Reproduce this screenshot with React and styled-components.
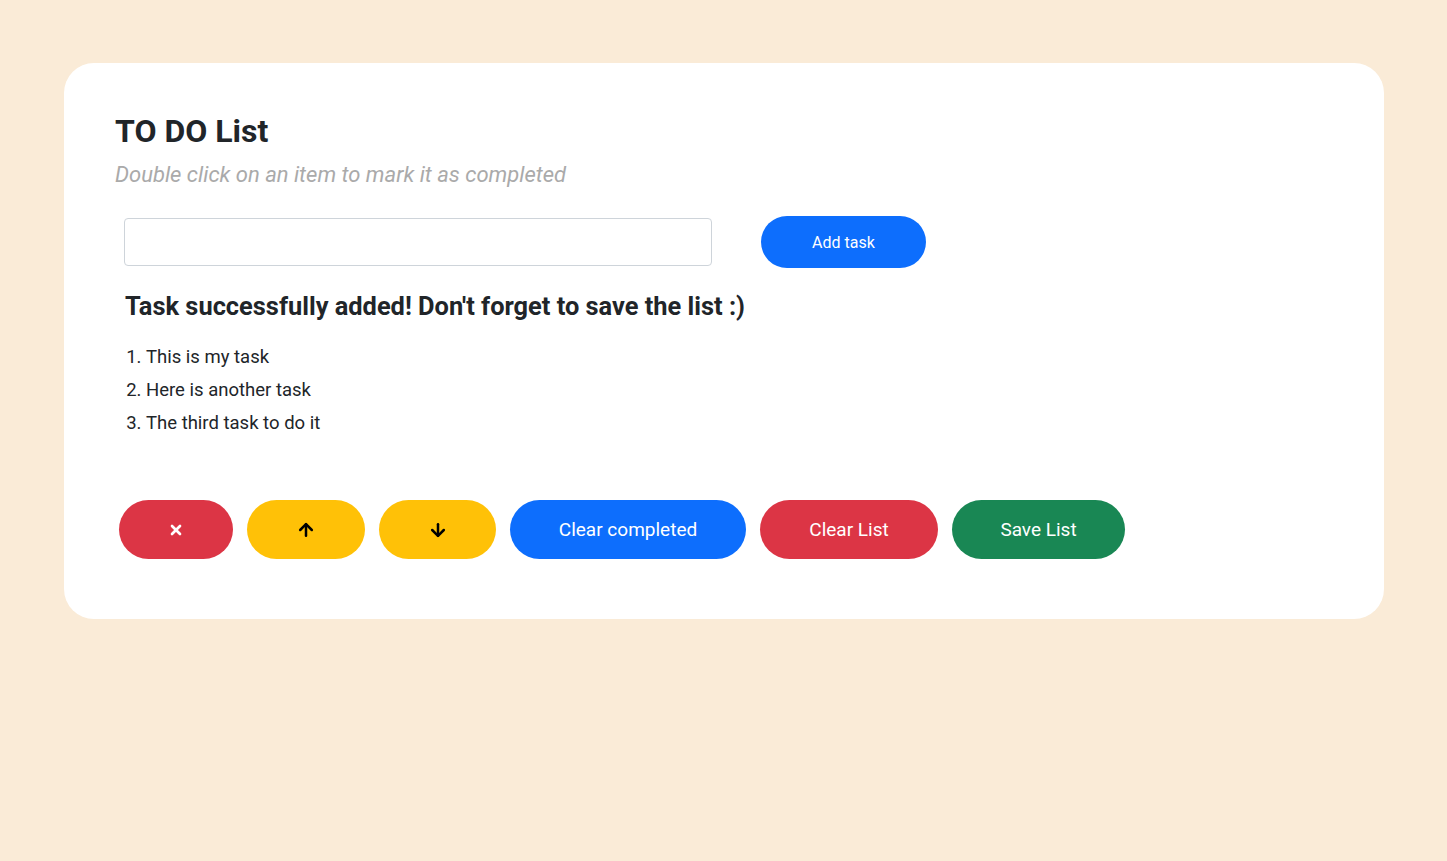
import React, { useState } from "react";
import styled, { createGlobalStyle } from "styled-components";
import { X, ArrowUp, ArrowDown } from "lucide-react";

const GlobalStyle = createGlobalStyle`
  body {
    margin: 0;
    background: #faebd7;
    font-family: Roboto, "Liberation Sans", sans-serif;
    color: #212529;
  }
`;

const colors = {
  danger: "#dc3545",
  warning: "#ffc107",
  primary: "#0d6efd",
  success: "#198754",
};

const App = () => {
  const [tasks] = useState([
    "This is my task",
    "Here is another task",
    "The third task to do it",
  ]);
  const [value, setValue] = useState("");

  return (
    <Page>
      <GlobalStyle />
      <Card>
        <Title>TO DO List</Title>
        <Subtitle>Double click on an item to mark it as completed</Subtitle>
        <InputRow>
          <TaskInput value={value} onChange={(e) => setValue(e.target.value)} />
          <AddBtn>Add task</AddBtn>
        </InputRow>
        <Message>Task successfully added! Don't forget to save the list :)</Message>
        <TaskList>
          {tasks.map((t) => (
            <TaskItem key={t}>{t}</TaskItem>
          ))}
        </TaskList>
        <Actions>
          <PillBtn variant="danger" w={114}>
            <X size={16} strokeWidth={4} />
          </PillBtn>
          <PillBtn variant="warning" w={118} dark>
            <ArrowUp size={20} strokeWidth={3} />
          </PillBtn>
          <PillBtn variant="warning" w={117} dark>
            <ArrowDown size={20} strokeWidth={3} />
          </PillBtn>
          <PillBtn variant="primary" w={236}>Clear completed</PillBtn>
          <PillBtn variant="danger" w={178}>Clear List</PillBtn>
          <PillBtn variant="success" w={173}>Save List</PillBtn>
        </Actions>
      </Card>
    </Page>
  );
};

export default App;

const Page = styled.div`
  min-height: 861px;
  padding: 63px 63px 0 64px;
  box-sizing: border-box;
`;

const Card = styled.div`
  background: #fff;
  border-radius: 30px;
  width: 1320px;
  height: 556px;
  box-sizing: border-box;
  padding: 48px 51px 0 51px;
  display: flex;
  flex-direction: column;
`;

const Title = styled.h1`
  margin: 0;
  font-size: 32px;
  font-weight: 700;
  line-height: 40px;
  color: #212529;
`;

const Subtitle = styled.p`
  margin: 10px 0 0;
  font-size: 22px;
  font-style: italic;
  color: #aaaaaa;
  line-height: 28px;
`;

const InputRow = styled.div`
  display: flex;
  align-items: center;
  margin: 27px 0 0 9px;
`;

const TaskInput = styled.input`
  width: 588px;
  height: 48px;
  box-sizing: border-box;
  border: 1px solid #ced4da;
  border-radius: 4px;
  padding: 6px 12px;
  font-size: 16px;
  outline: none;
`;

const AddBtn = styled.button`
  margin-left: 49px;
  width: 165px;
  height: 52px;
  border: none;
  border-radius: 26px;
  background: ${colors.primary};
  color: #fff;
  font-family: inherit;
  font-size: 16px;
  cursor: pointer;
`;

const Message = styled.h3`
  margin: 22px 0 0 10px;
  font-size: 25.4px;
  font-weight: 700;
  line-height: 32px;
  color: #212529;
`;

const TaskList = styled.ol`
  margin: 19px 0 0 10px;
  padding-left: 21px;
  font-size: 18.5px;
  line-height: 33px;
`;

const TaskItem = styled.li`
  cursor: pointer;
`;

const Actions = styled.div`
  display: flex;
  gap: 14px;
  margin: 60px 0 0 4px;
`;

const PillBtn = styled.button`
  width: ${(p) => p.w}px;
  height: 59px;
  border: none;
  border-radius: 30px;
  background: ${(p) => colors[p.variant]};
  color: ${(p) => (p.dark ? "#000" : "#fff")};
  font-family: inherit;
  font-size: 19px;
  display: flex;
  align-items: center;
  justify-content: center;
  cursor: pointer;
`;
